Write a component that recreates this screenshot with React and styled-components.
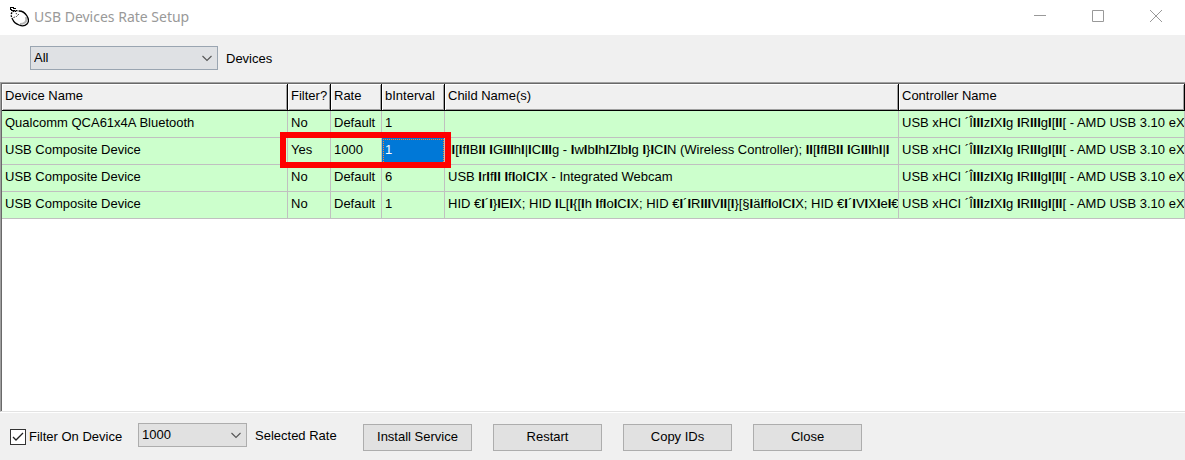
import React from "react";
import styled, { createGlobalStyle } from "styled-components";

const GlobalStyle = createGlobalStyle`
  *, *::before, *::after { box-sizing: border-box; }
  html, body { margin: 0; padding: 0; }
  body {
    background: #f0f0f0;
    color: #000;
    font-family: "Liberation Sans", Arial, sans-serif;
    font-size: 13px;
    line-height: 16px;
  }
  button, select, input { font: inherit; color: inherit; margin: 0; }
`;

const Window = styled.main`
  display: flex;
  flex-direction: column;
  min-height: 100vh;
`;

const TitleBar = styled.header`
  display: flex;
  align-items: center;
  height: 35px;
  padding-left: 9px;
  background: #fff;
`;

const Title = styled.h1`
  flex: 1;
  margin: 0;
  padding: 0 0 2px 5px;
  color: #999;
  font: 400 14px/20px "Noto Sans", "Open Sans", sans-serif;
`;

const CaptionButton = styled.button`
  display: flex;
  align-items: center;
  justify-content: center;
  width: 58px;
  height: 32px;
  padding: 0 0 3px;
  border: 0;
  background: transparent;
  color: #999;
`;

const Toolbar = styled.div`
  display: flex;
  align-items: center;
  height: 47px;
  padding: 0 30px 2px;
`;

const Field = styled.div`
  display: flex;
  align-items: center;
  gap: 8px;
  align-self: ${(p) => (p.$top ? "flex-start" : "center")};
`;

const FieldLabel = styled.label`
  min-width: 88px;
  padding-top: 2px;
  white-space: nowrap;
`;

const SelectWrap = styled.div`
  position: relative;
  width: ${(p) => p.$width};
  color: #555;
`;

const Select = styled.select`
  display: block;
  appearance: none;
  width: 100%;
  height: 24px;
  padding: 0 24px 0 3px;
  border: 1px solid ${(p) => (p.$active ? "#9aa5b1" : "#adadad")};
  border-radius: 0;
  background: ${(p) => (p.$active ? "#dfe1e4" : "#e1e1e1")};
  color: #000;
`;

const Arrow = styled.svg`
  position: absolute;
  right: 6px;
  top: 9px;
  pointer-events: none;
`;

const GridPanel = styled.section`
  display: flex;
  flex: 1;
  overflow: hidden;
  background: #fff;
  border-style: solid;
  border-width: 1px 0 1px 1px;
  border-color: #a0a0a0 #e3e3e3 #e3e3e3 #a0a0a0;
`;

const GridInner = styled.div`
  flex: 1;
  min-width: 0;
  border: solid #696969;
  border-width: 1px 0 0 1px;
`;

const Table = styled.table`
  width: 100%;
  table-layout: fixed;
  border-collapse: separate;
  border-spacing: 0;
`;

const Column = styled.col`
  width: ${(p) => p.$width};
`;

const HeadCell = styled.th`
  height: 27px;
  padding: 0 0 3px 3px;
  border-right: 1px solid #000;
  border-bottom: 1px solid #000;
  background: #f0f0f0;
  box-shadow: inset 1px 1px #fff, inset -1px -1px #a0a0a0;
  font-weight: 400;
  text-align: left;
  white-space: nowrap;
  overflow: hidden;
`;

const Cell = styled.td`
  position: relative;
  height: 27px;
  padding: 0 0 3px 3px;
  border-right: 1px solid #c0c0c0;
  border-bottom: 1px solid #c0c0c0;
  background: ${(p) => (p.$selected ? "#0078d7" : "#ccffcc")};
  background-clip: padding-box;
  color: ${(p) => (p.$selected ? "#fff" : "#000")};
  outline: ${(p) => (p.$selected ? "1px dotted #ff8728" : "none")};
  outline-offset: -2px;
  white-space: nowrap;
  overflow: ${(p) => (p.$marked ? "visible" : "hidden")};
`;

const Highlight = styled.span`
  position: absolute;
  z-index: 1;
  left: -8px;
  top: -6px;
  width: 171px;
  height: 36px;
  border: 6px solid #f00;
  pointer-events: none;
`;

const Footer = styled.footer`
  display: flex;
  align-items: center;
  min-height: 48px;
  padding: 10px 10px 9px;
  border-top: 1px solid #fff;
`;

const CheckLabel = styled.label`
  display: flex;
  align-items: center;
  gap: 3px;
  width: 128px;
  white-space: nowrap;
`;

const CheckWrap = styled.span`
  position: relative;
  display: flex;
  color: #222;
`;

const Checkbox = styled.input`
  appearance: none;
  width: 16px;
  height: 16px;
  border: 1px solid #333;
  background: #fff;
  &:not(:checked) + svg { display: none; }
`;

const Tick = styled.svg`
  position: absolute;
  inset: 0;
  pointer-events: none;
`;

const Actions = styled.div`
  display: flex;
  gap: 21px;
  margin-left: 20px;
`;

const Button = styled.button`
  width: 109px;
  height: 27px;
  padding: 0;
  border: 1px solid #adadad;
  background: #e1e1e1;
  white-space: nowrap;
`;

// "¦" in the data stands for a heavy stroke left by a wrongly decoded name.
const Decoded = ({ text }) =>
  text
    .split(/(¦+)/)
    .map((part, i) =>
      part.startsWith("¦") ? <b key={i}>{part.replace(/¦/g, "I")}</b> : part
    );

const controller = "USB xHCI ´Î¦¦¦z¦X¦g ¦R¦¦¦g¦[¦¦[ - AMD USB 3.10 eX";

const columns = [
  ["Device Name", "286px"],
  ["Filter?", "43px"],
  ["Rate", "51px"],
  ["bInterval", "63px"],
  ["Child Name(s)", "454px"],
  ["Controller Name", "auto"],
];

const devices = [
  { name: "Qualcomm QCA61x4A Bluetooth", filter: "No", rate: "Default", interval: "1", child: "" },
  {
    name: "USB Composite Device", filter: "Yes", rate: "1000", interval: "1", active: true,
    child: "¦¦[¦f¦B¦¦ ¦G¦¦¦h¦|¦C¦¦¦g - ¦w¦b¦h¦Z¦b¦g ¦}¦C¦N (Wireless Controller); ¦¦[¦f¦B¦¦ ¦G¦¦¦h¦|¦",
  },
  {
    name: "USB Composite Device", filter: "No", rate: "Default", interval: "6",
    child: "USB ¦r¦f¦¦ ¦f¦o¦C¦X - Integrated Webcam",
  },
  {
    name: "USB Composite Device", filter: "No", rate: "Default", interval: "1",
    child: "HID €¦´¦}¦E¦X; HID ¦L[¦{[¦h ¦f¦o¦C¦X; HID €¦´¦R¦¦¦V¦¦[¦}[§¦ä¦f¦o¦C¦X; HID €¦´¦V¦X¦e¦€",
  },
];

const MouseIcon = () => (
  <svg width="20" height="23" viewBox="0 0 20 23" fill="none" aria-hidden="true">
    <ellipse cx="11.500" cy="12" rx="9" ry="6.500" transform="rotate(43 11.5 12)" fill="#fff" />
    <path d="M17 11q1 4-1 5.500t-5 1.500" stroke="#b4b4b4" strokeWidth="2" />
    <path d="M10 5q5 0 8 5t0 8-8 1-6-5" stroke="#000" strokeWidth="1.300" />
    <path d="M4 14Q1 9 3 6.500T10 5" stroke="#000" strokeWidth="1.300" strokeDasharray="2 1" />
    <path d="M6.500 2.500h-2v-1h-3v2l2 1h2l1 1.500" stroke="#000" shapeRendering="crispEdges" />
    <path d="M4.500 11.500l3-1 3-3M7 7l1.500 2.500" stroke="#333" strokeDasharray="1.500 1" />
  </svg>
);

const DropDown = ({ id, width, active, options }) => (
  <SelectWrap $width={width}>
    <Select id={id} $active={active} defaultValue={options[0]}>
      {options.map((o) => <option key={o}>{o}</option>)}
    </Select>
    <Arrow width="10" height="7" viewBox="0 0 10 7" fill="none">
      <path d="M.5 1L5 5.5 9.500 1" stroke="currentColor" strokeWidth="1.1" />
    </Arrow>
  </SelectWrap>
);

export default function App() {
  return (
    <>
      <GlobalStyle />
      <Window>
        <TitleBar>
          <MouseIcon />
          <Title>USB Devices Rate Setup</Title>
          <CaptionButton aria-label="Minimize">
            <svg width="12" height="12" stroke="currentColor"><path d="M0 5.500h12" /></svg>
          </CaptionButton>
          <CaptionButton aria-label="Maximize">
            <svg width="12" height="12" fill="none" stroke="currentColor"><path d="M.5.5h11v11H.5z" /></svg>
          </CaptionButton>
          <CaptionButton aria-label="Close window">
            <svg width="12" height="12" stroke="currentColor"><path d="M0 0l12 12M12 0L0 12" /></svg>
          </CaptionButton>
        </TitleBar>

        <Toolbar>
          <Field>
            <DropDown id="devices" width="188px" active options={["All"]} />
            <FieldLabel htmlFor="devices">Devices</FieldLabel>
          </Field>
        </Toolbar>

        <GridPanel>
          <GridInner>
            <Table>
              <colgroup>
                {columns.map(([name, width]) => <Column key={name} $width={width} />)}
              </colgroup>
              <thead>
                <tr>
                  {columns.map(([name]) => <HeadCell key={name} scope="col">{name}</HeadCell>)}
                </tr>
              </thead>
              <tbody>
                {devices.map((d, i) => (
                  <tr key={i}>
                    <Cell>{d.name}</Cell>
                    <Cell $marked={d.active}>
                      {d.filter}
                      {d.active && <Highlight />}
                    </Cell>
                    <Cell>{d.rate}</Cell>
                    <Cell $selected={d.active}>{d.interval}</Cell>
                    <Cell><Decoded text={d.child} /></Cell>
                    <Cell><Decoded text={controller} /></Cell>
                  </tr>
                ))}
              </tbody>
            </Table>
          </GridInner>
        </GridPanel>

        <Footer>
          <CheckLabel>
            <CheckWrap>
              <Checkbox type="checkbox" defaultChecked />
              <Tick width="16" height="16" viewBox="0 0 16 16" fill="none">
                <path d="M3 8l3 3 7-7" stroke="currentColor" strokeWidth="1.3" />
              </Tick>
            </CheckWrap>
            Filter On Device
          </CheckLabel>
          <Field $top>
            <DropDown id="rate" width="109px" options={["1000", "500", "250", "125"]} />
            <FieldLabel htmlFor="rate">Selected Rate</FieldLabel>
          </Field>
          <Actions>
            <Button>Install Service</Button>
            <Button>Restart</Button>
            <Button>Copy IDs</Button>
            <Button>Close</Button>
          </Actions>
        </Footer>
      </Window>
    </>
  );
}
